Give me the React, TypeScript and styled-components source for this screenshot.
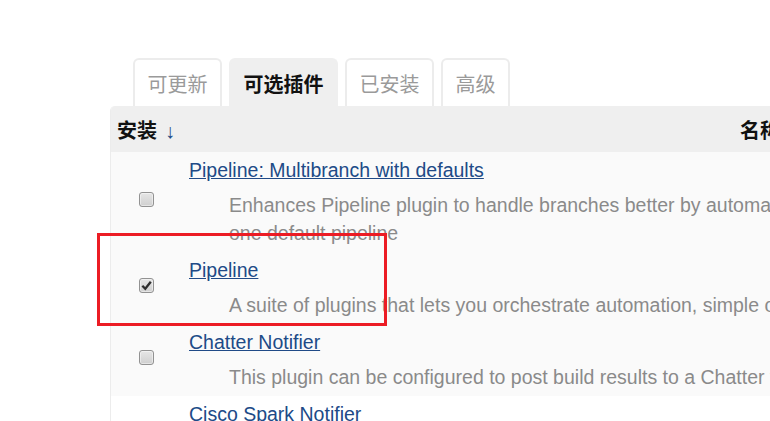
import React from "react";
import styled, { createGlobalStyle } from "styled-components";

const Global = createGlobalStyle`
  html, body { margin: 0; padding: 0; background: #ffffff; overflow: hidden; }
  body { font-family: "Liberation Sans", "Noto Sans CJK SC", Arial, sans-serif; }
`;

const Page = styled.div`
  position: relative;
  width: 770px;
  height: 421px;
  overflow: hidden;
  padding: 58px 0 0 110px;
  box-sizing: border-box;
`;

const TabBar = styled.div`
  display: flex;
  gap: 7px;
  padding-left: 23px;
  height: 48px;
`;

const Tab = styled.div<{ $active?: boolean }>`
  box-sizing: border-box;
  height: 48px;
  padding: 0 12.5px;
  display: flex;
  align-items: center;
  font-size: 20px;
  font-family: "Noto Sans CJK SC", "Liberation Sans", sans-serif;
  color: ${(p) => (p.$active ? "#111" : "#9a9a9a")};
  font-weight: ${(p) => (p.$active ? 700 : 400)};
  background: ${(p) => (p.$active ? "#efefef" : "#fff")};
  border: 2px solid ${(p) => (p.$active ? "#efefef" : "#ececec")};
  border-bottom: none;
  border-radius: 6px 6px 0 0;
`;

const Table = styled.div`
  width: 1228px;
  border-left: 1px solid #ececec;
  border-radius: 5px 0 0 0;
  overflow: hidden;
`;

const HeaderRow = styled.div`
  display: grid;
  grid-template-columns: 71px 1156px;
  background: #efefef;
  height: 46px;
  align-items: center;
`;

const HeaderCell = styled.div<{ $center?: boolean }>`
  padding: 2px 6px 0;
  font-size: 20px;
  font-weight: 700;
  color: #111;
  line-height: 28px;
  white-space: nowrap;
  text-align: ${(p) => (p.$center ? "center" : "left")};
  font-family: "Noto Sans CJK SC", "Liberation Sans", sans-serif;
`;

const SortArrow = styled.span`
  font-family: "Liberation Sans", sans-serif;
  font-weight: 400;
  color: #204a87;
  margin-left: 8px;
`;

const Row = styled.div<{ $shade?: boolean }>`
  display: grid;
  grid-template-columns: 71px 1156px;
  background: ${(p) => (p.$shade ? "#fafafa" : "#ffffff")};
  align-items: center;
`;

const CheckCell = styled.div`
  display: flex;
  justify-content: center;
  padding-bottom: 6px;
`;

const Box = styled.span`
  box-sizing: border-box;
  width: 15px;
  height: 15px;
  border: 1px solid #929292;
  border-radius: 3px;
  background: linear-gradient(#e6e6e6, #cfcfcf);
  box-shadow: inset 0 0 0 1px rgba(255, 255, 255, 0.45);
  display: flex;
  align-items: center;
  justify-content: center;
`;

const NameCell = styled.div`
  padding: 4px 7px 5px;
`;

const PluginLink = styled.a`
  display: block;
  font-size: 19.5px;
  line-height: 28px;
  color: #204a87;
  text-decoration: underline;
  white-space: nowrap;
`;

const Desc = styled.div`
  margin-top: 7px;
  padding-left: 40px;
  font-size: 19.5px;
  line-height: 28px;
  color: #8a8a8a;
  white-space: nowrap;
`;

const Highlight = styled.div`
  position: absolute;
  left: 97px;
  top: 233px;
  width: 290px;
  height: 93px;
  box-sizing: border-box;
  border: 3px solid #ec1c24;
  pointer-events: none;
`;

const Checkbox = ({ checked }: { checked?: boolean }) => (
  <Box>
    {checked && (
      <svg width="11" height="11" viewBox="0 0 10 10">
        <path d="M1.2 5.2 L3.9 8 L8.9 1.6" fill="none" stroke="#2e2e2e" strokeWidth="2.1" />
      </svg>
    )}
  </Box>
);

const plugins = [
  {
    name: "Pipeline: Multibranch with defaults",
    desc: [
      "Enhances Pipeline plugin to handle branches better by automatically grouping builds from different branches and",
      "one default pipeline",
    ],
    shade: true,
  },
  {
    name: "Pipeline",
    desc: ["A suite of plugins that lets you orchestrate automation, simple or complex. See Pipeline as Code with Jenkins for more details."],
    checked: true,
    shade: true,
  },
  {
    name: "Chatter Notifier",
    desc: ["This plugin can be configured to post build results to a Chatter feed."],
    shade: true,
  },
  {
    name: "Cisco Spark Notifier",
    desc: ["Posts build notifications to Cisco Spark rooms."],
    shade: false,
  },
];

export default function App() {
  return (
    <Page>
      <Global />
      <TabBar>
        <Tab>可更新</Tab>
        <Tab $active>可选插件</Tab>
        <Tab>已安装</Tab>
        <Tab>高级</Tab>
      </TabBar>
      <Table>
        <HeaderRow>
          <HeaderCell>
            安装<SortArrow>↓</SortArrow>
          </HeaderCell>
          <HeaderCell $center>名称</HeaderCell>
        </HeaderRow>
        {plugins.map((p) => (
          <Row key={p.name} $shade={p.shade}>
            <CheckCell>
              <Checkbox checked={p.checked} />
            </CheckCell>
            <NameCell>
              <PluginLink href="#">{p.name}</PluginLink>
              <Desc>
                {p.desc.map((line, i) => (
                  <div key={i}>{line}</div>
                ))}
              </Desc>
            </NameCell>
          </Row>
        ))}
      </Table>
      <Highlight />
    </Page>
  );
}
